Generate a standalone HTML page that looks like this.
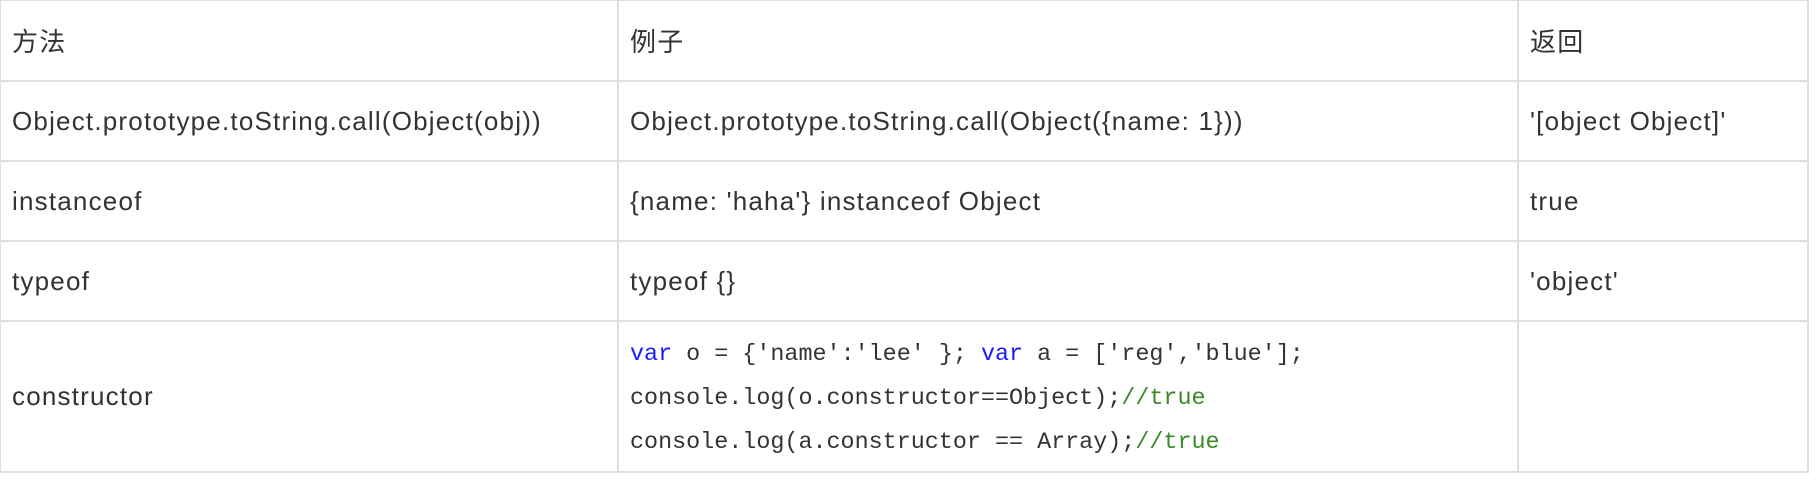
<!DOCTYPE html>
<html><head><meta charset="utf-8"><style>
html,body{margin:0;padding:0;background:#fff;width:1816px;height:486px;overflow:hidden}
table{border-collapse:collapse;position:absolute;left:-1px;top:-1px;table-layout:fixed}
td{border:2px solid #dfdfdf;padding:0 0 0 11px;color:#333;font-family:"Liberation Sans","Noto Sans CJK SC",sans-serif;font-size:26px;letter-spacing:1.2px;vertical-align:middle;white-space:nowrap}
.code{font-family:"Liberation Mono",monospace;font-size:23.4px;letter-spacing:0;line-height:44px;color:#333;padding-top:4px}
.k{color:#1a1aff}.c{color:#3a8a2a}
</style></head><body>
<table>
<colgroup><col style="width:618px"><col style="width:900px"><col style="width:290px"></colgroup>
<tr style="height:81px"><td>方法</td><td>例子</td><td>返回</td></tr>
<tr style="height:80px"><td>Object.prototype.toString.call(Object(obj))</td><td>Object.prototype.toString.call(Object({name: 1}))</td><td>'[object Object]'</td></tr>
<tr style="height:80px"><td>instanceof</td><td>{name: 'haha'} instanceof Object</td><td>true</td></tr>
<tr style="height:80px"><td>typeof</td><td>typeof {}</td><td>'object'</td></tr>
<tr style="height:151px"><td>constructor</td><td class="code"><span class="k">var</span> o = {'name':'lee' }; <span class="k">var</span> a = ['reg','blue'];<br>console.log(o.constructor==Object);<span class="c">//true</span><br>console.log(a.constructor == Array);<span class="c">//true</span></td><td></td></tr>
</table>
</body></html>
